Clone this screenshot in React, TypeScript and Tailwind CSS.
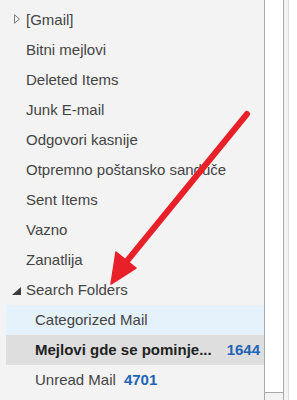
import React from 'react';

type Row = {
  label: string;
  indent?: boolean;
  count?: string;
  bold?: boolean;
  bg?: string;
  caret?: 'closed' | 'open';
};

const rows: Row[] = [
  { label: '[Gmail]', caret: 'closed' },
  { label: 'Bitni mejlovi' },
  { label: 'Deleted Items' },
  { label: 'Junk E-mail' },
  { label: 'Odgovori kasnije' },
  { label: 'Otpremno poštansko sanduče' },
  { label: 'Sent Items' },
  { label: 'Vazno' },
  { label: 'Zanatlija' },
  { label: 'Search Folders', caret: 'open' },
  { label: 'Categorized Mail', indent: true, bg: 'bg-[#e5f1fb]' },
  { label: 'Mejlovi gde se pominje...', indent: true, bold: true, count: '1644', bg: 'bg-[#dedede]' },
  { label: 'Unread Mail', indent: true, count: '4701' },
];

function Caret({ kind }: { kind: 'closed' | 'open' }) {
  if (kind === 'closed') {
    return (
      <svg width="9" height="10" viewBox="0 0 9 10" className="absolute left-[13px] top-[9px]">
        <path d="M1.5 0.8 L6.5 5 L1.5 9.2 Z" fill="none" stroke="#7a7a7a" strokeWidth="1" />
      </svg>
    );
  }
  return (
    <svg width="10" height="8" viewBox="0 0 10 8" className="absolute left-[12px] top-[12px]">
      <path d="M9 0 L9 8 L0 8 Z" fill="#3c3c3c" />
    </svg>
  );
}

export default function App() {
  return (
    <div className="relative flex h-[400px] w-[297px] overflow-hidden bg-white font-['Liberation_Sans',Arial,sans-serif] text-[15px] text-[#444]">
      {/* folder pane */}
      <div className="w-[264px] shrink-0 bg-[#f3f3f3] pt-[5px]">
        {rows.map((r, i) => (
          <div
            key={i}
            className={`relative flex h-[30px] items-center whitespace-nowrap ${r.indent ? 'ml-[6px] pl-[29px]' : 'pl-[26px]'} ${r.bg ?? ''} ${r.bold ? 'justify-between pr-[4px]' : ''}`}
          >
            {r.caret && <Caret kind={r.caret} />}
            <span className={r.bold ? 'font-bold text-[#222]' : ''}>{r.label}</span>
            {r.count && (
              <span className={`font-bold text-[#1f64b5] ${r.bold ? '' : 'ml-[8px]'}`}>{r.count}</span>
            )}
          </div>
        ))}
      </div>

      {/* scroll column */}
      <div className="flex w-[20px] shrink-0 flex-col border-x border-[#a9a9a9]">
        <div className="h-[392px] bg-white" />
        <div className="flex-1 border-t border-[#a9a9a9] bg-[#f3f3f3]" />
      </div>
      <div className="w-[4px] shrink-0 bg-[#f3f3f3]" />
      <div className="flex-1 border-l border-[#dcdcdc] bg-white" />

      {/* red arrow annotation */}
      <svg className="pointer-events-none absolute inset-0" width="297" height="400" viewBox="0 0 297 400">
        <line x1="247" y1="114" x2="127" y2="261" stroke="#e8202a" strokeWidth="6" strokeLinecap="round" />
        <path d="M111 284 L116 252 L136 268 Z" fill="#e8202a" stroke="#e8202a" strokeWidth="1.5" strokeLinejoin="round" />
      </svg>
    </div>
  );
}
